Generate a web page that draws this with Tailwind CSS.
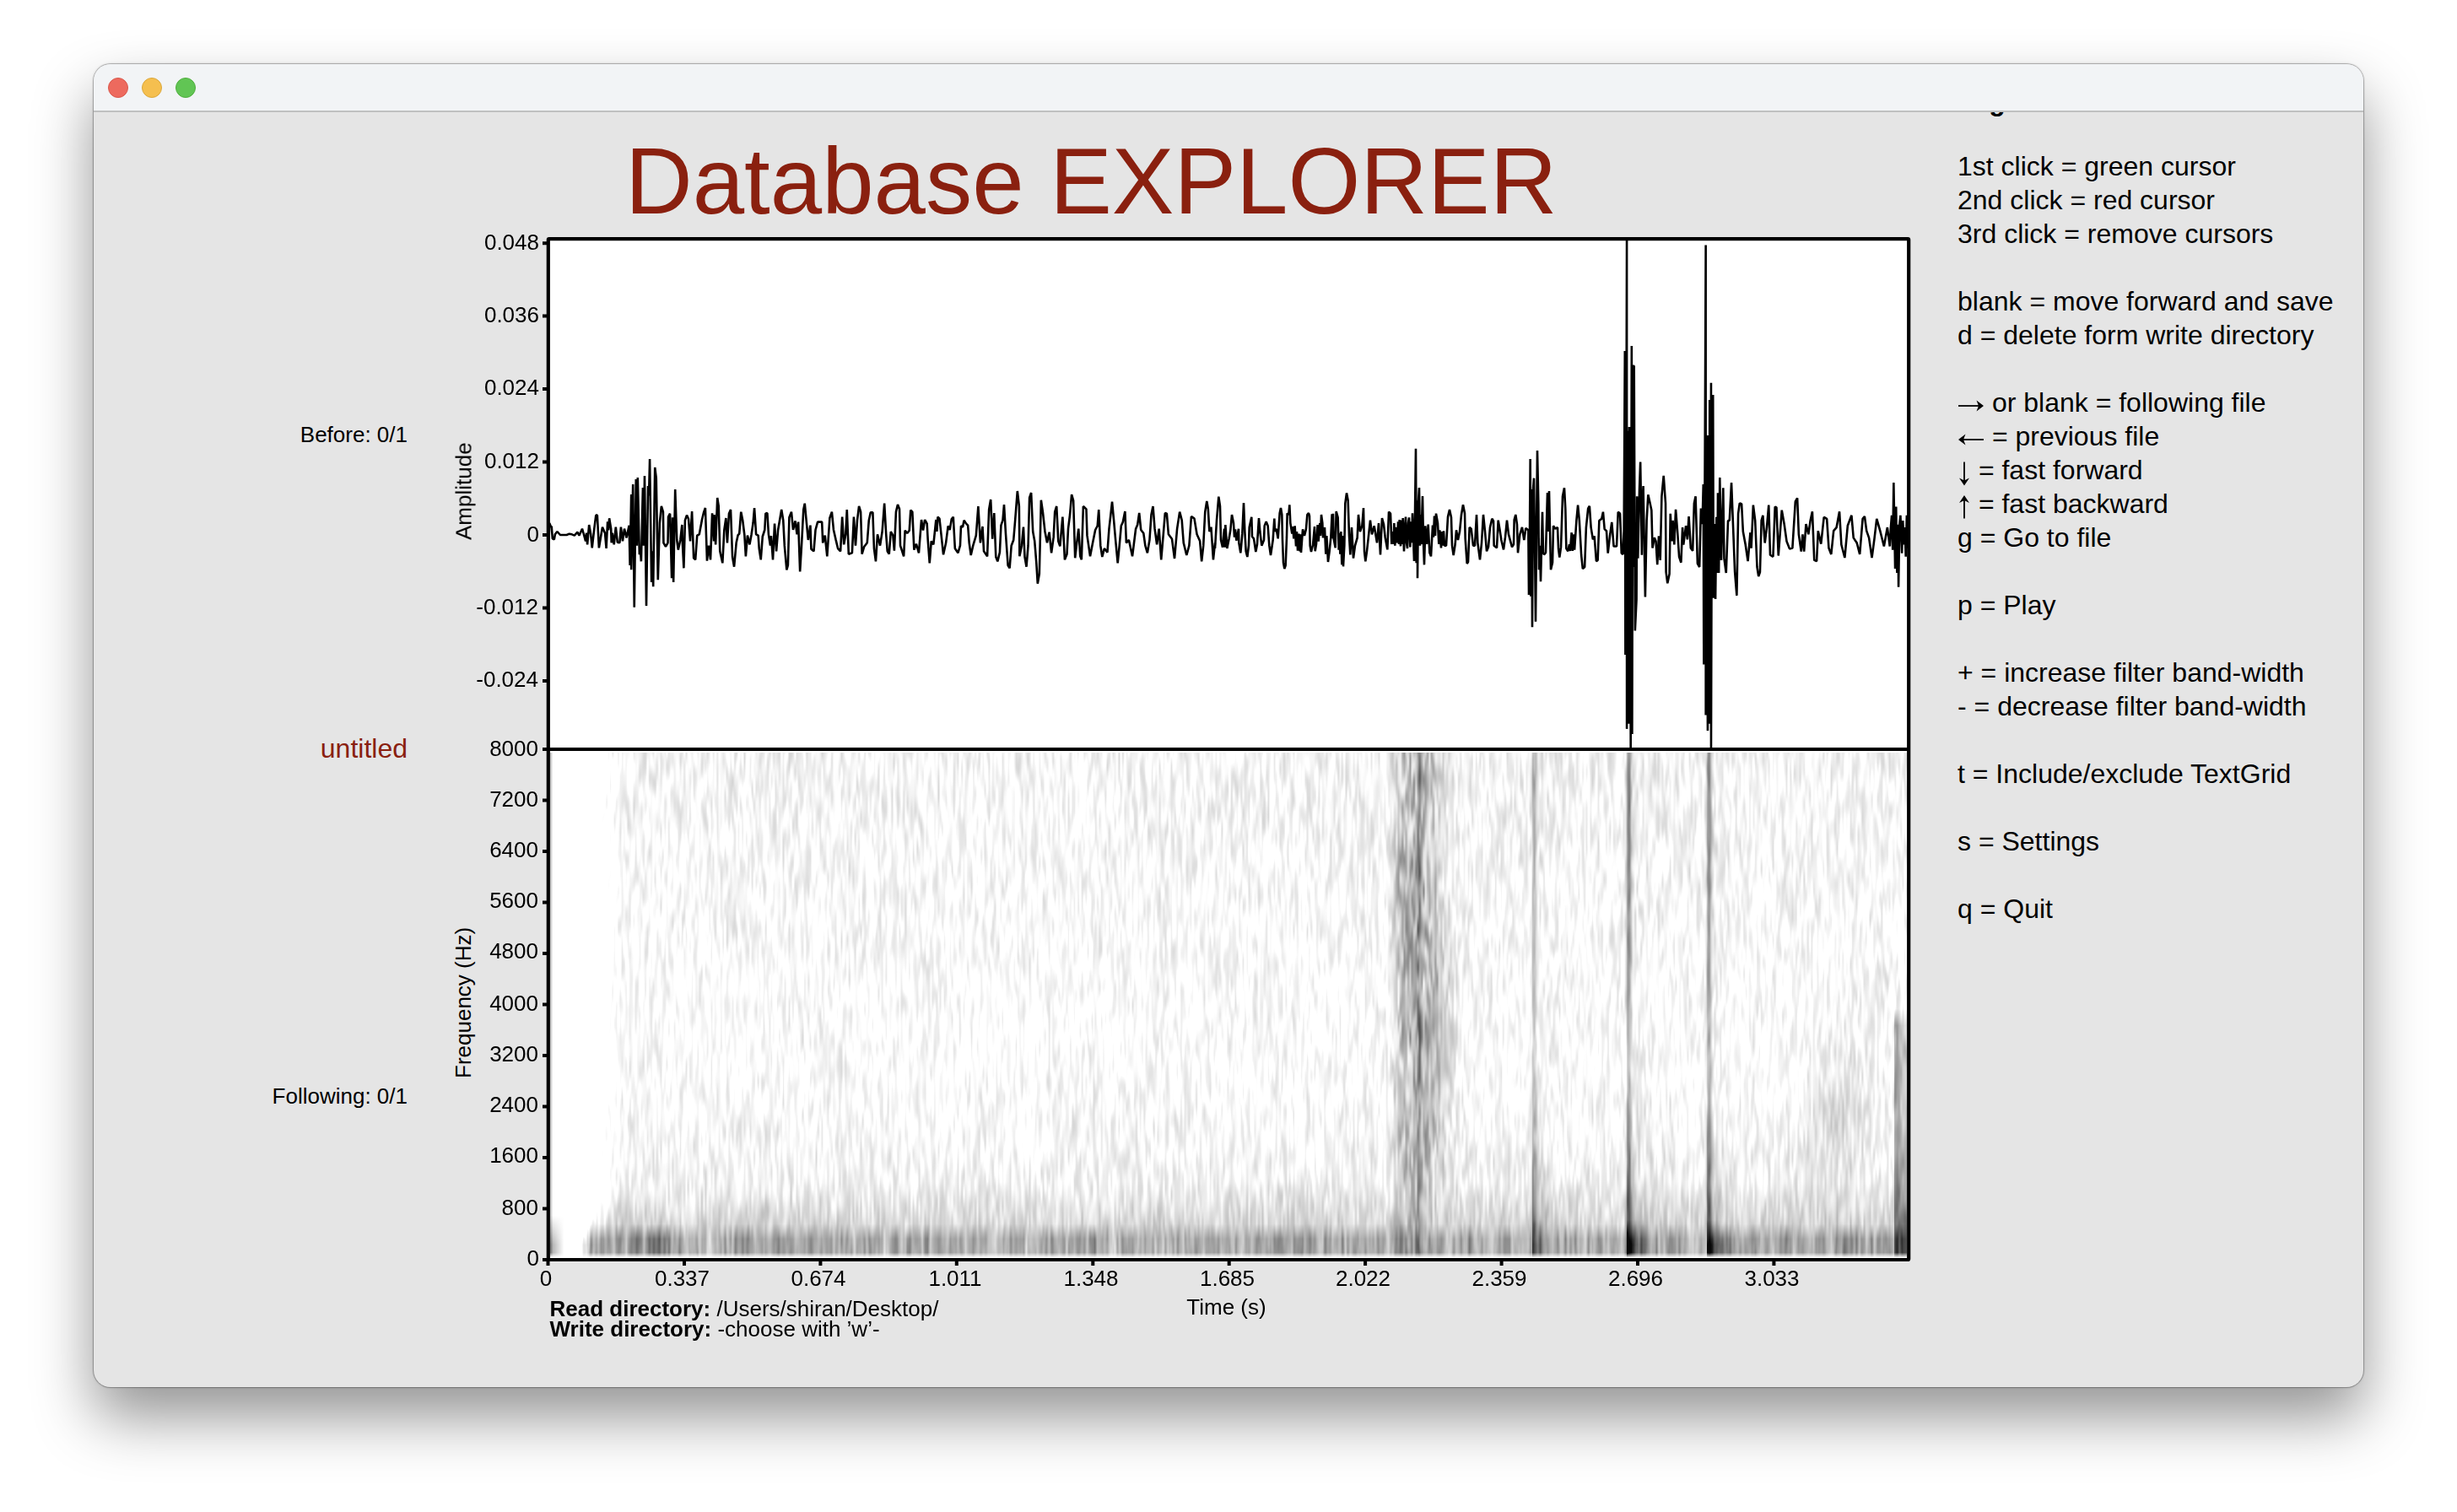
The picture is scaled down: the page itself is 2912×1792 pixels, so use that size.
<!DOCTYPE html>
<html lang="en">
<head>
<meta charset="utf-8">
<title>Database EXPLORER</title>
<script src="https://cdn.jsdelivr.net/npm/@tailwindcss/browser@4"></script>
</head>
<body class="h-[1792px] w-[2912px] overflow-hidden bg-white pt-[76px] pl-[111px] font-['Liberation_Sans',Arial,sans-serif] text-black">
<main class="flex h-[1568px] w-[2690px] flex-col overflow-hidden rounded-[20px] bg-[#e5e5e5] shadow-[0_0_0_1px_rgba(0,0,0,0.2),0_0_3px_rgba(0,0,0,0.3),0_36px_70px_rgba(0,0,0,0.42)]">
  <header class="flex h-[57px] shrink-0 items-center gap-4 border-b-2 border-[#bfc0c0] bg-[#f2f4f6] pl-[17px]">
    <span class="size-6 rounded-full border border-[#d9584c] bg-[#ed6a5e]"></span>
    <span class="size-6 rounded-full border border-[#daa73c] bg-[#f5bf4f]"></span>
    <span class="size-6 rounded-full border border-[#4fae3e] bg-[#61c554]"></span>
  </header>

  <div class="flex h-[1511px] overflow-hidden">
    <!-- File position -->
    <aside class="flex w-[372px] shrink-0 flex-col text-right">
      <p class="mt-[366px] text-[26px] leading-8">Before: 0/1</p>
      <p class="mt-[336px] text-[32px] leading-10 text-[#8a200f]">untitled</p>
      <p class="mt-[376px] text-[26px] leading-8">Following: 0/1</p>
    </aside>

    <section class="ml-[17px] w-[1800px] shrink-0">
      <h1 class="pt-[28px] pb-px pl-[241px] text-[110.4px] leading-[108px] whitespace-nowrap text-[#8a200f]">Database EXPLORER</h1>
      <svg class="block text-[26px]" width="1800" height="1374" viewBox="500 270 1800 1374">
        <clipPath id="wave"><rect x="648" y="283" width="1614" height="605"/></clipPath>
        <rect x="650" y="283" width="1612" height="1210" fill="#fff"/>
        <foreignObject x="652" y="892" width="1608" height="599"><canvas id="spec" width="1608" height="599" class="block"></canvas></foreignObject>
        <g fill="none" stroke="#000" stroke-width="2.6" stroke-linejoin="bevel" clip-path="url(#wave)">
          <polyline vector-effect="non-scaling-stroke" transform="translate(640 500) scale(.5102 .33333)" points="15,455 17,340 20,450 22,360 25,372 27,372 29,415 33,418 35,400 40,390 47,402 62,402 68,398 74,400 80,404 87,392 91,404 98,380 101,396 106,424 108,395 110,436 114,366 118,400 121,448 126,380 130,332 133,332 137,448 145,374 151,396 154,450 157,355 159,385 161,343 165,380 166,430 168,395 172,436 176,374 180,428 185,430 188,374 192,424 196,380 201,412 207,368 209,510 212,258 212,526 216,222 219,659 223,204 225,440 227,198 231,472 233,450 235,496 239,234 241,440 243,192 247,654 251,228 253,262 255,132 259,570 261,460 263,586 267,162 270,200 274,562 278,360 282,300 286,320 287,430 292,444 297,430 298,338 302,326 306,556 308,340 310,570 314,240 318,420 321,455 326,420 330,366 331,430 334,520 337,350 341,332 345,345 349,424 353,318 357,484 361,490 365,404 370,400 376,350 380,324 384,306 388,494 392,440 396,490 400,325 404,424 405,330 408,436 412,270 415,300 418,460 424,502 428,384 432,342 435,430 439,326 443,312 447,480 451,515 456,430 460,402 463,398 467,320 471,352 475,402 478,478 482,404 487,436 491,402 495,360 498,306 502,400 507,404 509,450 513,490 517,408 522,384 524,326 528,324 531,400 535,440 537,405 541,490 545,362 549,460 553,384 561,312 565,350 568,440 573,526 576,510 579,340 584,320 588,384 593,352 597,400 600,356 604,532 608,430 612,312 615,290 618,340 623,420 628,368 630,452 636,460 640,384 645,356 655,356 657,430 662,404 667,478 673,342 678,320 682,384 687,418 692,450 698,460 702,338 706,436 710,400 713,312 717,470 725,466 729,338 733,440 737,350 741,300 745,320 748,470 753,444 760,430 764,350 768,322 773,322 776,450 780,496 784,400 790,440 795,390 800,290 804,400 807,460 811,470 815,390 820,404 823,458 827,320 831,294 835,310 837,440 845,478 848,386 853,396 858,386 861,314 865,320 869,455 874,434 880,466 886,348 890,386 894,348 899,362 901,420 905,502 909,424 914,436 920,348 922,390 924,338 928,344 932,400 937,472 943,430 948,370 952,384 956,346 960,338 964,450 971,466 976,440 978,370 982,374 985,350 990,362 994,368 997,430 1001,474 1006,440 1013,404 1018,300 1023,430 1028,372 1031,460 1039,478 1043,312 1047,276 1051,416 1055,324 1059,480 1063,496 1068,464 1071,368 1075,350 1078,294 1082,400 1087,510 1091,520 1095,440 1100,420 1104,346 1109,246 1113,300 1114,478 1119,440 1123,374 1126,480 1130,515 1134,440 1137,270 1141,252 1145,390 1149,424 1153,500 1156,575 1160,540 1164,278 1168,320 1173,390 1178,430 1183,392 1188,466 1193,410 1196,320 1200,300 1204,424 1208,442 1214,338 1219,490 1224,470 1227,380 1231,330 1235,258 1239,280 1243,484 1247,430 1251,380 1255,478 1258,490 1262,300 1269,310 1271,404 1278,478 1284,430 1290,384 1295,370 1298,312 1302,440 1306,480 1311,450 1318,464 1322,380 1326,326 1329,284 1333,350 1337,420 1342,502 1346,440 1350,370 1354,356 1359,318 1362,430 1368,420 1376,478 1384,380 1388,366 1392,324 1396,384 1402,396 1406,440 1411,466 1416,420 1420,330 1424,300 1428,380 1433,436 1438,380 1443,490 1448,400 1452,324 1456,326 1460,400 1468,416 1474,486 1480,380 1486,320 1491,350 1495,430 1502,474 1508,440 1513,336 1520,344 1526,400 1533,424 1537,496 1541,440 1545,320 1549,282 1552,310 1555,390 1559,374 1564,490 1568,430"/>
          <polyline vector-effect="non-scaling-stroke" transform="translate(1340 530) scale(.33333)" points="300,360 306,260 313,176 318,210 321,330 327,356 333,290 335,356 337,276 343,360 350,325 355,295 360,240 366,270 369,320 372,292 376,332 384,290 385,340 391,376 397,308 402,198 406,300 410,370 415,390 420,350 422,285 430,248 432,318 438,325 445,372 450,345 456,252 460,300 466,350 474,330 476,280 482,265 488,280 493,350 498,384 506,330 511,254 513,300 518,290 524,325 530,235 534,216 538,240 540,330 543,410 547,432 551,420 555,320 557,235 562,240 565,205 568,270 574,308 577,282 580,325 584,280 588,352 591,300 594,368 598,308 602,370 604,310 606,375 612,292 618,315 624,290 628,240 633,234 636,245 638,350 642,372 648,348 654,282 656,370 660,345 665,276 668,335 673,270 675,315 678,240 682,270 684,322 690,285 694,380 697,315 702,408 707,370 712,320 716,238 718,325 720,236 722,325 728,358 731,228 737,250 740,365 743,305 745,380 748,300 751,418 754,315 756,424 760,350 763,200 768,163 773,190 777,315 781,382 786,285 792,395 798,350 806,322 810,240 816,300 823,280 828,216 831,370 835,406 840,370 845,325 852,260 858,310 866,280 876,340 882,270 888,382 894,252 900,275 905,320 913,364 918,230 924,236 928,345 932,300 935,345 937,270 940,350 942,285 948,340 951,265 954,345 956,258 960,352 963,260 966,345 968,252 972,370 975,290 978,248 981,340 984,360 987,270 990,250 994,355 998,265 1000,340 1002,235 1006,350 1008,405 1011,235 1014,5 1016,412 1020,190 1020,466 1023,195 1026,144 1029,350 1031,240 1034,345 1036,240 1038,174 1041,340 1044,418 1048,280 1053,345 1058,275 1063,375 1068,388 1074,278 1077,320 1080,245 1083,315 1086,236 1092,270 1096,345 1099,295 1104,358 1107,300 1110,350 1113,298 1116,350 1122,350 1128,248 1134,222 1140,250 1143,350 1148,384 1154,345 1158,295 1164,330 1170,300 1176,240 1182,205 1188,235 1190,325 1196,414 1200,408 1205,285 1211,290 1218,350 1224,350 1230,240 1234,340 1242,400 1248,340 1254,240 1260,300 1266,370 1272,355 1278,285 1285,254 1290,262 1292,350 1302,358 1307,260 1312,290 1318,330 1326,364 1332,320 1338,260 1344,310 1356,355 1362,345 1364,258 1369,240 1374,275 1377,376 1384,310 1392,285 1399,330 1405,288 1414,295 1416,525 1419,300 1421,42 1423,530 1426,150 1428,640 1431,150 1434,110 1437,330 1440,620 1446,12 1450,200 1452,436 1455,350 1458,478 1464,230 1467,375 1470,382 1476,375 1482,162 1485,300 1488,156 1494,436 1500,410 1503,280 1510,290 1518,285 1521,360 1525,392 1530,356 1536,175 1542,145 1546,220 1549,360 1555,370 1560,345"/>
          <polyline vector-effect="non-scaling-stroke" transform="translate(1400 270) scale(.574 .40816)" points="801,930 803,938 806,885 808,938 810,890 812,935 816,850 819,805 822,850 826,950 829,990 833,985 836,870 840,815 843,808 846,870 850,905 853,895 857,968 860,965 863,850 868,845 871,825 874,875 878,880 881,945 885,895 889,855 893,925 899,925 902,825 906,830 909,945 912,948 914,880 916,358 917,1240 919,600 920,20 920,1455 922,590 923,1440 925,578 926,1440 927,580 928,1520 930,343 931,1470 932,600 933,398 934,985 935,400 937,1170 940,1080 941,780 943,960 946,760 948,680 951,950 952,800 954,750 958,1072 961,850 964,775 968,800 971,820 973,930 977,900 980,910 983,978 986,895 989,965 992,780 996,720 1000,800 1001,1000 1004,1032 1008,1005 1010,830 1013,910 1015,850 1018,920 1021,818 1025,890 1028,955 1032,972 1035,870 1037,920 1042,865 1045,905 1048,838 1052,930 1056,938 1059,800 1062,780 1066,975 1070,985 1073,815 1076,860 1078,745 1079,1268 1081,745 1083,50 1083,1415 1085,603 1087,1460 1088,603 1090,1440 1091,500 1092,1430 1094,450 1094,1520 1096,485 1097,1075 1098,485 1099,1075 1101,860 1103,1078 1105,840 1107,1002 1108,770 1110,1002 1112,725 1115,965 1119,755 1121,960 1125,1002 1129,850 1132,850 1136,740 1139,850 1143,998 1147,1068 1150,830 1153,800 1157,802 1160,882 1165,920 1170,968 1175,885 1177,930 1181,805 1185,850 1189,985 1192,1012 1195,1000 1198,850 1201,835 1205,915 1209,870 1213,805 1216,950 1222,955 1226,810 1229,812 1233,952 1240,820 1245,860 1250,910 1256,932 1262,930 1268,795 1272,785 1275,890 1280,940 1283,890 1286,940 1290,860 1295,890 1299,850 1303,824 1307,965 1312,968 1315,880 1321,918 1327,840 1333,845 1337,930 1342,948 1347,880 1353,870 1359,824 1363,920 1370,958 1376,865 1384,835 1388,900 1395,915 1401,948 1407,845 1411,838 1415,880 1420,900 1426,958 1431,905 1436,845 1443,880 1451,925 1458,870 1463,925 1465,870 1467,835 1469,935 1471,740 1474,990 1476,810 1478,1002 1480,862 1481,1043 1483,862 1485,835 1488,945 1490,850 1492,920 1494,870 1496,955 1498,835 1500,930"/>
        </g>
        <g fill="none" stroke="#000" stroke-width="4.2">
          <rect x="649.8" y="283.2" width="1612.4" height="1209.8" rx="1"/>
          <path d="M650 888H2262"/>
          <path stroke-width="4" d="M643 288.3h7M643 374.6h7M643 461h7M643 547.5h7M643 634h7M643 720.5h7M643 807h7M643 888h7M643 948.5h7M643 1009h7M643 1069.5h7M643 1130h7M643 1190.5h7M643 1251h7M643 1311.5h7M643 1372h7M643 1432.5h7M643 1493h7"/>
          <path stroke-width="4" d="M649.5 1493v7M811 1493v7M972.4 1493v7M1133.8 1493v7M1295.3 1493v7M1456.7 1493v7M1618.1 1493v7M1779.6 1493v7M1941 1493v7M2102.4 1493v7"/>
        </g>
        <g text-anchor="end">
          <text x="639" y="296">0.048</text><text x="639" y="382">0.036</text><text x="639" y="468">0.024</text><text x="639" y="554.5">0.012</text><text x="639" y="641.5">0</text><text x="638" y="728">-0.012</text><text x="638" y="814">-0.024</text>
          <text x="638" y="895.5">8000</text><text x="638" y="956">7200</text><text x="638" y="1016">6400</text><text x="638" y="1075.5">5600</text><text x="638" y="1136">4800</text><text x="638" y="1198">4000</text><text x="638" y="1258">3200</text><text x="638" y="1318">2400</text><text x="638" y="1378">1600</text><text x="638" y="1440">800</text><text x="639" y="1500">0</text>
        </g>
        <g text-anchor="middle">
          <text x="647" y="1524">0</text><text x="808.5" y="1524">0.337</text><text x="970" y="1524">0.674</text><text x="1132" y="1524">1.011</text><text x="1293" y="1524">1.348</text><text x="1454.5" y="1524">1.685</text><text x="1615.5" y="1524">2.022</text><text x="1777" y="1524">2.359</text><text x="1938.5" y="1524">2.696</text><text x="2100" y="1524">3.033</text>
          <text x="1453.5" y="1557.5">Time (s)</text>
        </g>
        <text transform="translate(558.5 640) rotate(-90)">Amplitude</text>
        <text transform="translate(558 1278) rotate(-90)">Frequency (Hz)</text>
        <text x="651.5" y="1560"><tspan font-weight="700">Read directory:</tspan> /Users/shiran/Desktop/</text>
        <text x="651.5" y="1583.5"><tspan font-weight="700">Write directory:</tspan> -choose with ’w’-</text>
      </svg>
    </section>

    <!-- Keyboard and mouse shortcuts -->
    <aside class="ml-5 text-[32px] leading-10 whitespace-nowrap">
      <h2 class="mt-[-33px] font-bold">Legend</h2>
      <ul class="mt-[37px]">
        <li>1st click = green cursor</li>
        <li>2nd click = red cursor</li>
        <li>3rd click = remove cursors</li>
        <li class="mt-10">blank = move forward and save</li>
        <li>d = delete form write directory</li>
        <li class="mt-10 flex"><svg class="h-10 w-8" viewBox="0 0 32 40" fill="none" stroke="#000" stroke-width="1.8"><path d="M1 24H30"/><path fill="#000" stroke="none" d="M31 24l-8.500-6.500 2.500 6.500-2.500 6.500z"/></svg><span class="whitespace-pre"> or blank = following file</span></li>
        <li class="flex"><svg class="h-10 w-8" viewBox="0 0 32 40" fill="none" stroke="#000" stroke-width="1.8"><path d="M2 24H31"/><path fill="#000" stroke="none" d="M1 24l8.500-6.500-2.500 6.500 2.500 6.500z"/></svg><span class="whitespace-pre"> = previous file</span></li>
        <li class="flex"><svg class="h-10 w-4" viewBox="0 0 16 40" fill="none" stroke="#000" stroke-width="1.8"><path d="M8 10.500V37"/><path fill="#000" stroke="none" d="M8 38.500l6-9-6 3-6-3z"/></svg><span class="whitespace-pre"> = fast forward</span></li>
        <li class="flex"><svg class="h-10 w-4" viewBox="0 0 16 40" fill="none" stroke="#000" stroke-width="1.8"><path d="M8 12V37.500"/><path fill="#000" stroke="none" d="M8 10l6 9-6-3-6 3z"/></svg><span class="whitespace-pre"> = fast backward</span></li>
        <li>g = Go to file</li>
        <li class="mt-10">p = Play</li>
        <li class="mt-10">+ = increase filter band-width</li>
        <li>- = decrease filter band-width</li>
        <li class="mt-10">t = Include/exclude TextGrid</li>
        <li class="mt-10">s = Settings</li>
        <li class="mt-10">q = Quit</li>
      </ul>
    </aside>
  </div>
</main>
<script>
// Grey-scale spectrogram: vertically smeared noise added to an energy envelope.
const W = 1608, H = 599, ctx = document.getElementById('spec').getContext('2d');
let seed = 7;
const rnd = () => { seed = (seed * 1664525 + 1013904223) >>> 0; return seed / 4294967296; };
const layer = (cw, ch) => {
  const nx = Math.ceil(W / cw) + 2, ny = Math.ceil(H / ch) + 3, g = [], off = [];
  for (let i = 0; i < nx; i++) { off.push(rnd()); const c = []; for (let j = 0; j < ny; j++) c.push(rnd()); g.push(c); }
  const col = (i, y) => { const v = y / ch + off[i], j = Math.floor(v), f = v - j, s = f * f * (3 - 2 * f); return g[i][j] * (1 - s) + g[i][j + 1] * s; };
  return (x, y) => { const u = x / cw, i = Math.floor(u), f = u - i; return col(i, y) * (1 - f) + col(i + 1, y) * f; };
};
const fine = layer(2.3, 22), wide = layer(5, 30), slow = layer(30, 70), cols = layer(3, 2000), cols2 = layer(9, 2000);
const gs = (v, c, s) => Math.exp(-((v - c) * (v - c)) / (2 * s * s));
const ramp = (v, a, b) => Math.min(1, Math.max(0, (v - a) / (b - a)));
const img = ctx.createImageData(W, H);
for (let x = 0; x < W; x++) {
  const X = x + 652;
  for (let y = 0; y < H; y++) {
    const Y = y + 892;
    const n = fine(x, y) * 0.7 + wide(x, y) * 0.3 - 0.5;
    const low = ramp(Y, 1450, 1468);
    let e = 0.005 + 0.035 * (1 - ramp(Y, 900, 1230)) + (slow(x, y) - 0.5) * 0.035;
    e += 0.04 * ramp(Y, 1270, 1400) + 0.11 * ramp(Y, 1400, 1450);
    e += low * (0.17 + (cols(x, y) - 0.5) * 0.3 + (cols2(x, y) - 0.5) * 0.16);
    e += low * 0.2 * gs(X, 768, 18);
    let k = 0.28 * (1 - 0.4 * low);
    const voice = (X < 1676 ? Math.exp(-Math.pow((1676 - X) / 24, 4)) : gs(X, 1676, 22)) * (1 - 0.5 * ramp(Y, 1380, 1450));
    e += voice * 0.27 * (0.75 + 0.25 * gs(Y, 1130, 180));
    k += voice * 0.3;
    e += 0.14 * gs(X, 1706, 13) * gs(Y, 1220, 75);
    e += 0.2 * gs(X, 1681.5, 1.8) * (1 - 0.6 * low);
    for (const [c, a] of [[1818, 0.2], [1930, 0.4], [2025, 0.37]]) {
      e += a * gs(X, c, 2.2) * (1 - 0.35 * gs(Y, 1250, 90)) * (1 - 0.6 * low);
      if (X >= c - 2) e += Math.exp(-(X - c) / 14) * (0.06 + 0.14 * ramp(Y, 1300, 1440) + a * 1.1 * ramp(Y, 1445, 1475));
    }
    e += 0.11 * gs(X, 2175, 28) * gs(Y, 1310, 75);
    if (X > 2244) e += 0.2 * ramp(Y, 1195, 1215) + 0.12 * ramp(Y, 1330, 1440) + 0.12 * gs(X, 2248, 3) * ramp(Y, 1195, 1215);
    let d = e + n * k;
    // fade in after the initial silence
    const above = 1 - ramp(Y, 1425, 1475);
    d -= above * (1 - ramp(X, 700, 735)) * 0.2 + (1 - ramp(X, 686, 696)) * 0.5;
    d -= above * (1 - ramp(X, 690, 712)) * 0.3;
    if (X < 668) d = Math.max(0, 0.3 * ramp(Y, 1440, 1475) * (1 - ramp(X, 654, 668)) + 0.25 * (1 - ramp(X, 652, 655)));
    if (Y > 1484) d *= 1 - ramp(Y, 1484, 1490);
    const v = 255 * (1 - Math.min(0.97, Math.max(0, d))), p = (y * W + x) * 4;
    img.data[p] = img.data[p + 1] = img.data[p + 2] = v; img.data[p + 3] = 255;
  }
}
ctx.putImageData(img, 0, 0);
</script>
</body>
</html>
